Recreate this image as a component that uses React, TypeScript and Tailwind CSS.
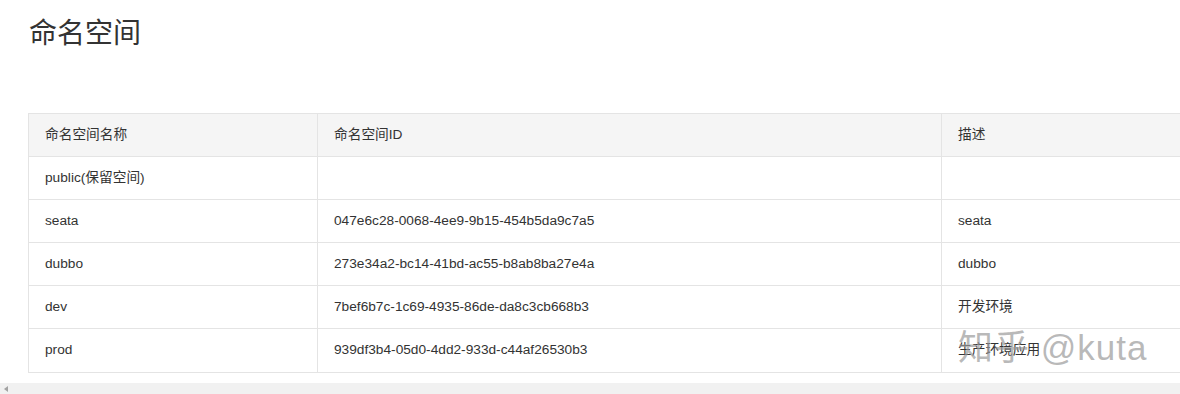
const rows = [
  { name: 'public(保留空间)', id: '', desc: '' },
  { name: 'seata', id: '047e6c28-0068-4ee9-9b15-454b5da9c7a5', desc: 'seata' },
  { name: 'dubbo', id: '273e34a2-bc14-41bd-ac55-b8ab8ba27e4a', desc: 'dubbo' },
  { name: 'dev', id: '7bef6b7c-1c69-4935-86de-da8c3cb668b3', desc: '开发环境' },
  { name: 'prod', id: '939df3b4-05d0-4dd2-933d-c44af26530b3', desc: '生产环境应用' },
];

export default function App() {
  return (
    <div
      className="relative w-[1180px] h-[394px] overflow-hidden bg-white text-[#333]"
      style={{ fontFamily: '"Liberation Sans", "Noto Sans CJK SC", sans-serif' }}
    >
      <h1 className="pl-[29px] pt-[14px] text-[28px] leading-[40px] font-normal text-[#333]">
        命名空间
      </h1>

      {/* table */}
      <div className="ml-[28px] mt-[59px] w-[1200px] border border-[#e4e4e4] text-[13.7px]">
        <div className="flex h-[43px] bg-[#f5f5f5] border-b border-[#e4e4e4]">
          <div className="w-[289px] shrink-0 pl-[16px] flex items-center border-r border-[#e4e4e4]">命名空间名称</div>
          <div className="w-[624px] shrink-0 pl-[16px] flex items-center border-r border-[#e4e4e4]">命名空间ID</div>
          <div className="flex-1 pl-[16px] flex items-center">描述</div>
        </div>
        {rows.map((r, i) => (
          <div
            key={r.name}
            className={`flex h-[43px] ${i < rows.length - 1 ? 'border-b border-[#e4e4e4]' : ''}`}
          >
            <div className="w-[289px] shrink-0 pl-[16px] flex items-center border-r border-[#e4e4e4]">{r.name}</div>
            <div className="w-[624px] shrink-0 pl-[16px] flex items-center border-r border-[#e4e4e4]">{r.id}</div>
            <div className="flex-1 pl-[16px] flex items-center">{r.desc}</div>
          </div>
        ))}
      </div>

      {/* watermark */}
      <div className="absolute left-[958px] top-[325px] text-[35px] leading-[46px] text-[#9a9a9a]/70 tracking-[1px] pointer-events-none">
        知乎 @kuta
      </div>

      {/* horizontal scrollbar */}
      <div className="absolute left-0 bottom-0 w-full h-[11px] bg-[#f1f1f1] flex items-center">
        <svg width="8" height="8" viewBox="0 0 8 8" className="ml-[2px]">
          <path d="M6 1 L2 4 L6 7 Z" fill="#a3a3a3" />
        </svg>
      </div>
    </div>
  );
}
